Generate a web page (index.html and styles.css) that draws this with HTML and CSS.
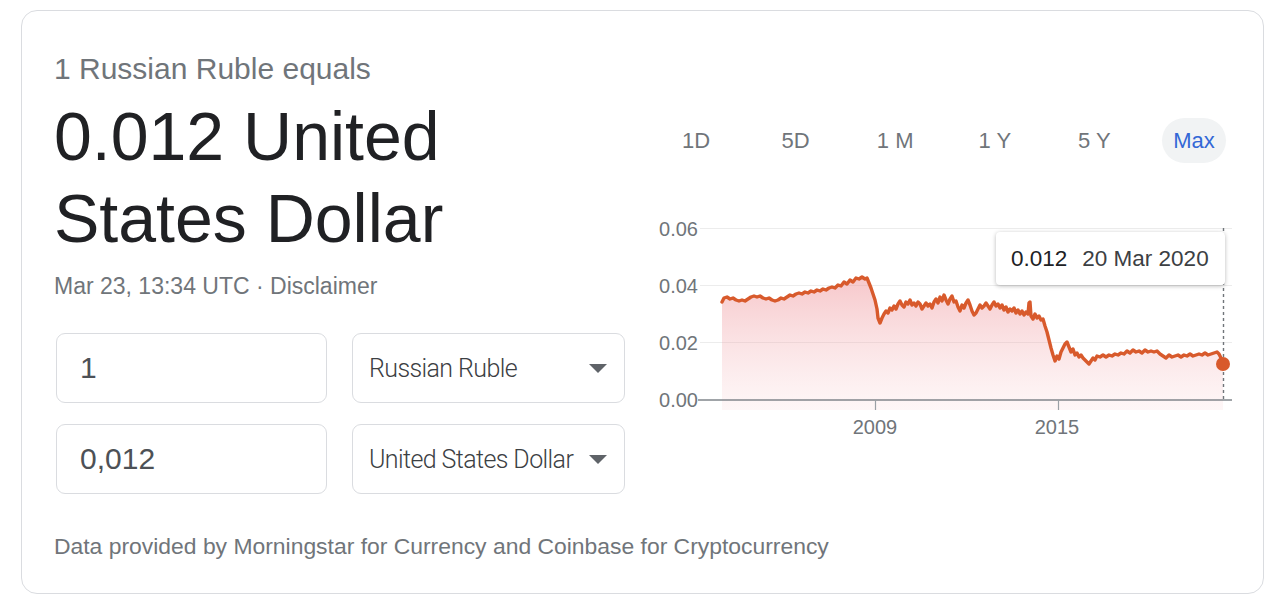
FILE: index.html
```html
<!DOCTYPE html>
<html lang="en">
<head>
<meta charset="utf-8">
<title>Currency converter</title>
<link rel="stylesheet" href="styles.css">
</head>
<body>
<div class="card">
  <div class="left">
    <div class="subtitle">1 Russian Ruble equals</div>
    <div class="big">0.012 United<br>States Dollar</div>
    <div class="date">Mar 23, 13:34 UTC · Disclaimer</div>
    <div class="inputs">
      <div class="box amount">1</div>
      <div class="box select"><span class="sel-text">Russian Ruble</span><span class="arrow"></span></div>
      <div class="box amount">0,012</div>
      <div class="box select"><span class="sel-text">United States Dollar</span><span class="arrow"></span></div>
    </div>
  </div>
  <div class="right">
    <div class="ranges">
      <div class="range">1D</div>
      <div class="range">5D</div>
      <div class="range">1 M</div>
      <div class="range">1 Y</div>
      <div class="range">5 Y</div>
      <div class="range active">Max</div>
    </div>
    <div class="chart">
      <svg class="chart-svg" width="599" height="235" viewBox="640 205 599 235">
        <defs>
          <linearGradient id="fillg" x1="0" y1="0" x2="0" y2="1">
            <stop offset="0" stop-color="#ee9096" stop-opacity="0.5"/>
            <stop offset="1" stop-color="#f5b8bd" stop-opacity="0.12"/>
          </linearGradient>
        </defs>
        <g class="grid">
          <line x1="700" y1="228.5" x2="1232" y2="228.5"/>
          <line x1="700" y1="285.5" x2="1232" y2="285.5"/>
          <line x1="700" y1="342.5" x2="1232" y2="342.5"/>
        </g>
        <g class="ylabels">
          <text x="698" y="236">0.06</text>
          <text x="698" y="293">0.04</text>
          <text x="698" y="350">0.02</text>
          <text x="698" y="407">0.00</text>
        </g>
        <path class="area" fill="url(#fillg)" d="M722,302 L724,298 727,297 730,299 733,298 736,300 739,301 742,300 745,301 748,299 751,297 754,296 757,297 760,296 763,298 766,299 769,298 772,300 775,301 778,300 781,298 784,299 787,297 790,295 793,296 796,294 799,293 802,294 805,292 808,293 811,291 814,292 817,290 820,291 823,289 826,290 829,288 832,287 835,288 838,285 841,286 844,282 847,284 850,280 853,282 856,278 859,279 862,277 865,279 867,278 869,283 871,288 873,294 875,300 877,309 878,318 880,323 882,318 884,314 886,311 888,313 890,308 892,310 894,306 896,309 898,304 900,301 902,305 904,307 906,302 908,304 910,300 912,305 914,303 916,306 918,302 920,304 922,309 924,306 926,303 928,306 930,304 932,308 934,302 936,299 938,303 940,297 942,301 944,295 946,300 948,304 950,299 952,296 954,302 956,301 958,307 960,311 962,305 964,308 966,303 968,300 970,305 972,311 974,315 976,313 978,309 980,305 982,308 984,306 986,303 988,306 990,309 992,305 994,302 996,306 998,304 1000,308 1002,305 1004,310 1006,307 1008,312 1010,309 1012,311 1014,308 1016,313 1018,310 1020,314 1022,311 1024,315 1026,312 1028,314 1029,303 1030,302 1031,316 1033,319 1035,314 1037,318 1039,316 1041,320 1043,319 1045,326 1047,332 1049,340 1051,348 1053,355 1055,361 1057,356 1059,359 1061,352 1063,348 1065,344 1067,342 1069,347 1071,352 1073,349 1075,355 1077,353 1079,357 1081,355 1083,358 1085,360 1087,362 1089,364 1091,361 1093,358 1095,360 1097,356 1100,357 1103,355 1106,357 1109,355 1112,356 1115,354 1118,355 1121,353 1124,354 1127,351 1130,353 1133,350 1136,352 1139,351 1142,353 1145,350 1148,352 1151,351 1154,352 1157,351 1160,354 1163,356 1166,358 1169,355 1172,357 1175,356 1178,355 1181,357 1184,355 1187,356 1190,354 1193,356 1196,355 1199,354 1202,355 1205,353 1208,355 1211,354 1214,353 1217,352 1219,354 1221,358 1223,364 L1223,410 L722,410 Z"/>
        <line class="axis" x1="698" y1="400" x2="1232" y2="400"/>
        <line class="tick" x1="875.5" y1="400" x2="875.5" y2="410"/>
        <line class="tick" x1="1058.5" y1="400" x2="1058.5" y2="410"/>
        <g class="xlabels">
          <text x="875" y="434">2009</text>
          <text x="1057" y="434">2015</text>
        </g>
        <line class="cursor" x1="1223.5" y1="228" x2="1223.5" y2="400"/>
        <path class="line" d="M722,302 L724,298 727,297 730,299 733,298 736,300 739,301 742,300 745,301 748,299 751,297 754,296 757,297 760,296 763,298 766,299 769,298 772,300 775,301 778,300 781,298 784,299 787,297 790,295 793,296 796,294 799,293 802,294 805,292 808,293 811,291 814,292 817,290 820,291 823,289 826,290 829,288 832,287 835,288 838,285 841,286 844,282 847,284 850,280 853,282 856,278 859,279 862,277 865,279 867,278 869,283 871,288 873,294 875,300 877,309 878,318 880,323 882,318 884,314 886,311 888,313 890,308 892,310 894,306 896,309 898,304 900,301 902,305 904,307 906,302 908,304 910,300 912,305 914,303 916,306 918,302 920,304 922,309 924,306 926,303 928,306 930,304 932,308 934,302 936,299 938,303 940,297 942,301 944,295 946,300 948,304 950,299 952,296 954,302 956,301 958,307 960,311 962,305 964,308 966,303 968,300 970,305 972,311 974,315 976,313 978,309 980,305 982,308 984,306 986,303 988,306 990,309 992,305 994,302 996,306 998,304 1000,308 1002,305 1004,310 1006,307 1008,312 1010,309 1012,311 1014,308 1016,313 1018,310 1020,314 1022,311 1024,315 1026,312 1028,314 1029,303 1030,302 1031,316 1033,319 1035,314 1037,318 1039,316 1041,320 1043,319 1045,326 1047,332 1049,340 1051,348 1053,355 1055,361 1057,356 1059,359 1061,352 1063,348 1065,344 1067,342 1069,347 1071,352 1073,349 1075,355 1077,353 1079,357 1081,355 1083,358 1085,360 1087,362 1089,364 1091,361 1093,358 1095,360 1097,356 1100,357 1103,355 1106,357 1109,355 1112,356 1115,354 1118,355 1121,353 1124,354 1127,351 1130,353 1133,350 1136,352 1139,351 1142,353 1145,350 1148,352 1151,351 1154,352 1157,351 1160,354 1163,356 1166,358 1169,355 1172,357 1175,356 1178,355 1181,357 1184,355 1187,356 1190,354 1193,356 1196,355 1199,354 1202,355 1205,353 1208,355 1211,354 1214,353 1217,352 1219,354 1221,358 1223,364"/>
        <circle class="dot" cx="1223" cy="364" r="7"/>
      </svg>
      <div class="tooltip"><span class="tip-val">0.012</span><span class="tip-date">20 Mar 2020</span></div>
    </div>
  </div>
  <div class="footer">Data provided by Morningstar for Currency and Coinbase for Cryptocurrency</div>
</div>
</body>
</html>
```

FILE: styles.css
```css
* { box-sizing: border-box; }
html, body { margin: 0; padding: 0; background: #fff; }
body {
  font-family: "Liberation Sans", Arial, Helvetica, sans-serif;
  width: 1280px;
  height: 612px;
  overflow: hidden;
}
.card {
  margin: 10px 0 0 21px;
  width: 1243px;
  height: 584px;
  border: 1px solid #dadce0;
  border-radius: 16px;
  padding: 40px 24px 0 32px;
  display: grid;
  grid-template-columns: 586px 1fr;
  grid-template-rows: auto auto;
  align-content: start;
}
.left { display: flex; flex-direction: column; }
.subtitle {
  font-size: 30px;
  line-height: 36px;
  color: #70757a;
}
.big {
  margin-top: 8px;
  font-size: 68px;
  line-height: 82px;
  color: #202124;
}
.date {
  margin-top: 13px;
  font-size: 23px;
  line-height: 28px;
  color: #70757a;
}
.inputs {
  margin-top: 33px;
  margin-left: 2px;
  display: grid;
  grid-template-columns: 271px 273px;
  grid-auto-rows: 70px;
  column-gap: 25px;
  row-gap: 21px;
}
.box {
  border: 1px solid #dadce0;
  border-radius: 9px;
  display: flex;
  align-items: center;
}
.amount {
  padding-left: 23px;
  font-size: 30px;
  color: #4d5156;
}
.select {
  padding: 0 17px 0 16px;
  justify-content: space-between;
}
.sel-text {
  font-family: Roboto, "Liberation Sans", sans-serif;
  font-weight: 300;
  font-size: 25px;
  letter-spacing: -0.6px;
  color: #3c4043;
  white-space: nowrap;
}
.arrow {
  width: 0;
  height: 0;
  border-left: 9px solid transparent;
  border-right: 9px solid transparent;
  border-top: 9px solid #5f6368;
  flex: none;
}
.right { display: flex; flex-direction: column; }
.ranges {
  margin-top: 67px;
  margin-left: 24px;
  width: 562px;
  height: 45px;
  display: flex;
  justify-content: space-between;
}
.range {
  width: 64px;
  height: 45px;
  border-radius: 23px;
  text-align: center;
  line-height: 45px;
  font-size: 22px;
  color: #70757a;
}
.range.active {
  background: #f1f3f4;
  color: #3367d6;
}
.chart {
  position: relative;
  margin-top: 42px;
  width: 599px;
  height: 235px;
}
.chart-svg { display: block; }
.grid line { stroke: #ececec; stroke-width: 1; }
.ylabels text {
  font-family: "Liberation Sans", Arial, sans-serif;
  font-size: 20px;
  fill: #70757a;
  text-anchor: end;
}
.xlabels text {
  font-family: "Liberation Sans", Arial, sans-serif;
  font-size: 20px;
  fill: #70757a;
  text-anchor: middle;
}
.axis { stroke: #80868b; stroke-width: 1.5; }
.tick { stroke: #9aa0a6; stroke-width: 1.2; }
.cursor { stroke: #70757a; stroke-width: 1.4; stroke-dasharray: 3 3; }
.line {
  fill: none;
  stroke: #d85a2c;
  stroke-width: 3.4;
  stroke-linejoin: round;
  stroke-linecap: round;
}
.dot { fill: #d85a2c; }
.tooltip {
  position: absolute;
  left: 356px;
  top: 27px;
  width: 229px;
  height: 53px;
  background: #fff;
  border-radius: 4px;
  box-shadow: 0 1px 4px rgba(0,0,0,0.28);
  display: flex;
  align-items: center;
  padding-left: 15px;
  font-size: 22.5px;
  white-space: nowrap;
}
.tip-val { color: #202124; margin-right: 15px; }
.tip-date { color: #3c4043; }
.footer {
  grid-column: 1 / -1;
  margin-top: 39px;
  font-size: 22.9px;
  line-height: 26px;
  color: #70757a;
}
```
